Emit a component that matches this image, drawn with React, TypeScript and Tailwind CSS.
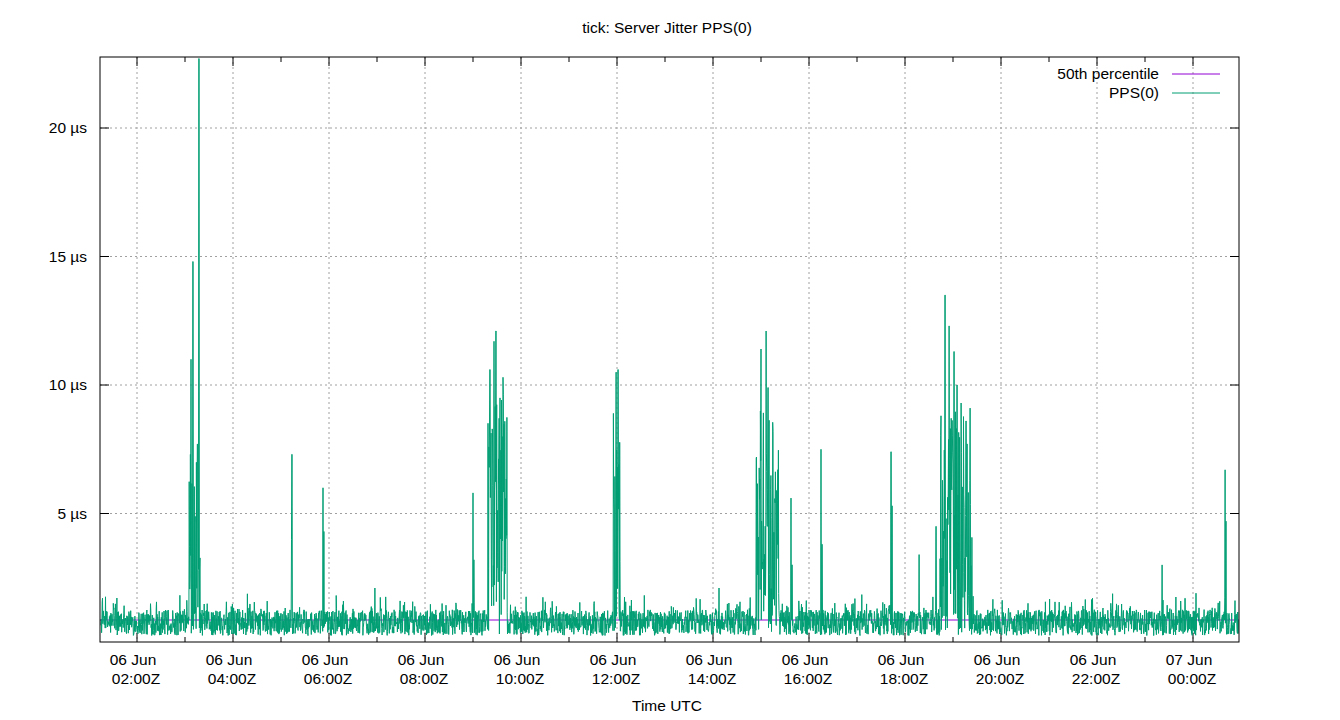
import React from "react";

const L = 100, R = 1239, T = 57, B = 642;
const yv = (v: number) => B - v * 25.7;

function rng(seed: number) {
  let s = seed >>> 0;
  return () => {
    s = (s * 1664525 + 1013904223) >>> 0;
    return s / 4294967296;
  };
}

type Burst = [number, number, number, number];
const bursts: Burst[] = [
  [189, 201, 6, 0.6], [488, 507, 9, 0.9], [613, 620, 8, 0.8],
  [756, 779, 8, 0.9], [940, 972, 8, 0.8],
];
const spikes: [number, number][] = [
  [199, 22.7], [193, 14.8], [191, 11], [197.5, 7.7], [190.5, 7.3],
  [292, 7.3], [291.5, 4], [323, 6], [324, 4.3], [473, 5.8], [474, 3.2],
  [490, 10.6], [496, 12.1], [494, 11.7], [503, 10.3], [500, 9.5],
  [616, 10.5], [618, 10.6], [761, 11.4], [766, 12.1], [768, 9.9], [773, 8.2],
  [791, 5.6], [792, 3], [821, 7.5], [822, 3.8], [891, 7.4], [892, 5.3],
  [919, 3.4], [936, 4.5], [945, 13.5], [949, 12.3], [954, 11.3], [957, 10],
  [961, 9.3], [966, 8.6], [970, 9.1], [941, 8.8], [1162, 3], [1225, 6.7], [1226, 4.7],
  [719, 2.1], [375, 2.1], [1196, 1.9], [1185, 1.7],
];

function buildPath() {
  const r = rng(12345);
  let d = "";
  for (let x = L + 1; x < R - 0.5; x += 0.3) {
    let v = 0.25 + r() * 1.0;
    if (r() < 0.12) v += r() * 0.7;
    for (const [s, e, m, dens] of bursts) {
      if (x >= s && x <= e && r() < dens) v = 1 + r() * m;
    }
    for (const [sx, m] of spikes) {
      if (Math.abs(x - sx) < 0.2) v = m;
    }
    const y = yv(v).toFixed(1);
    d += (d ? " L" : "M") + x.toFixed(2) + " " + y;
  }
  return d;
}

const majors = [137, 233, 329, 425, 521, 617, 713, 809, 905, 1001, 1097, 1193];
const labels = ["02:00Z", "04:00Z", "06:00Z", "08:00Z", "10:00Z", "12:00Z", "14:00Z", "16:00Z", "18:00Z", "20:00Z", "22:00Z", "00:00Z"];
const yt = [[5, "5 µs"], [10, "10 µs"], [15, "15 µs"], [20, "20 µs"]] as const;

export default function App() {
  const path = React.useMemo(buildPath, []);
  const minors = majors.map((m) => m - 48).concat([1241]).filter((x) => x > L && x < R);
  return (
    <div className="w-[1340px] h-[720px] bg-white relative" style={{ fontFamily: '"Liberation Sans", Arial, sans-serif' }}>
      <svg width="1340" height="720" className="absolute inset-0" fontFamily='"Liberation Sans", Arial, sans-serif' fontSize="15.5">
        <text x="667" y="33" textAnchor="middle" fill="#000">tick: Server Jitter PPS(0)</text>
        {yt.map(([v, t]) => (
          <g key={t}>
            <line x1={L} x2={R} y1={yv(v)} y2={yv(v)} stroke="#a0a0a0" strokeDasharray="2 3" />
            <line x1={L} x2={L + 9} y1={yv(v)} y2={yv(v)} stroke="#000" />
            <line x1={R - 9} x2={R} y1={yv(v)} y2={yv(v)} stroke="#000" />
            <text x={87} y={yv(v) + 5} textAnchor="end">{t}</text>
          </g>
        ))}
        {majors.map((x, i) => (
          <g key={x}>
            <line x1={x} x2={x} y1={T} y2={B} stroke="#a0a0a0" strokeDasharray="2 3" />
            <line x1={x} x2={x} y1={B - 9} y2={B} stroke="#000" />
            <line x1={x} x2={x} y1={T} y2={T + 9} stroke="#000" />
            <text x={x - 4} y={665} textAnchor="middle">{i === 11 ? "07 Jun" : "06 Jun"}</text>
            <text x={x - 1} y={684} textAnchor="middle">{labels[i]}</text>
          </g>
        ))}
        {minors.map((x) => (
          <g key={"m" + x}>
            <line x1={x} x2={x} y1={B - 5} y2={B} stroke="#000" />
            <line x1={x} x2={x} y1={T} y2={T + 5} stroke="#000" />
          </g>
        ))}
        <line x1={L} x2={R} y1={620} y2={620} stroke="#9400d3" />
        <path d={path} fill="none" stroke="#009e73" strokeWidth="1" />
        <rect x={L} y={T} width={R - L} height={B - T} fill="none" stroke="#000" />
        <text x="1159" y="79" textAnchor="end">50th percentile</text>
        <line x1="1172" x2="1220" y1="74" y2="74" stroke="#9400d3" />
        <text x="1159" y="98" textAnchor="end">PPS(0)</text>
        <line x1="1172" x2="1220" y1="93" y2="93" stroke="#009e73" />
        <text x="667" y="711" textAnchor="middle">Time UTC</text>
      </svg>
    </div>
  );
}
